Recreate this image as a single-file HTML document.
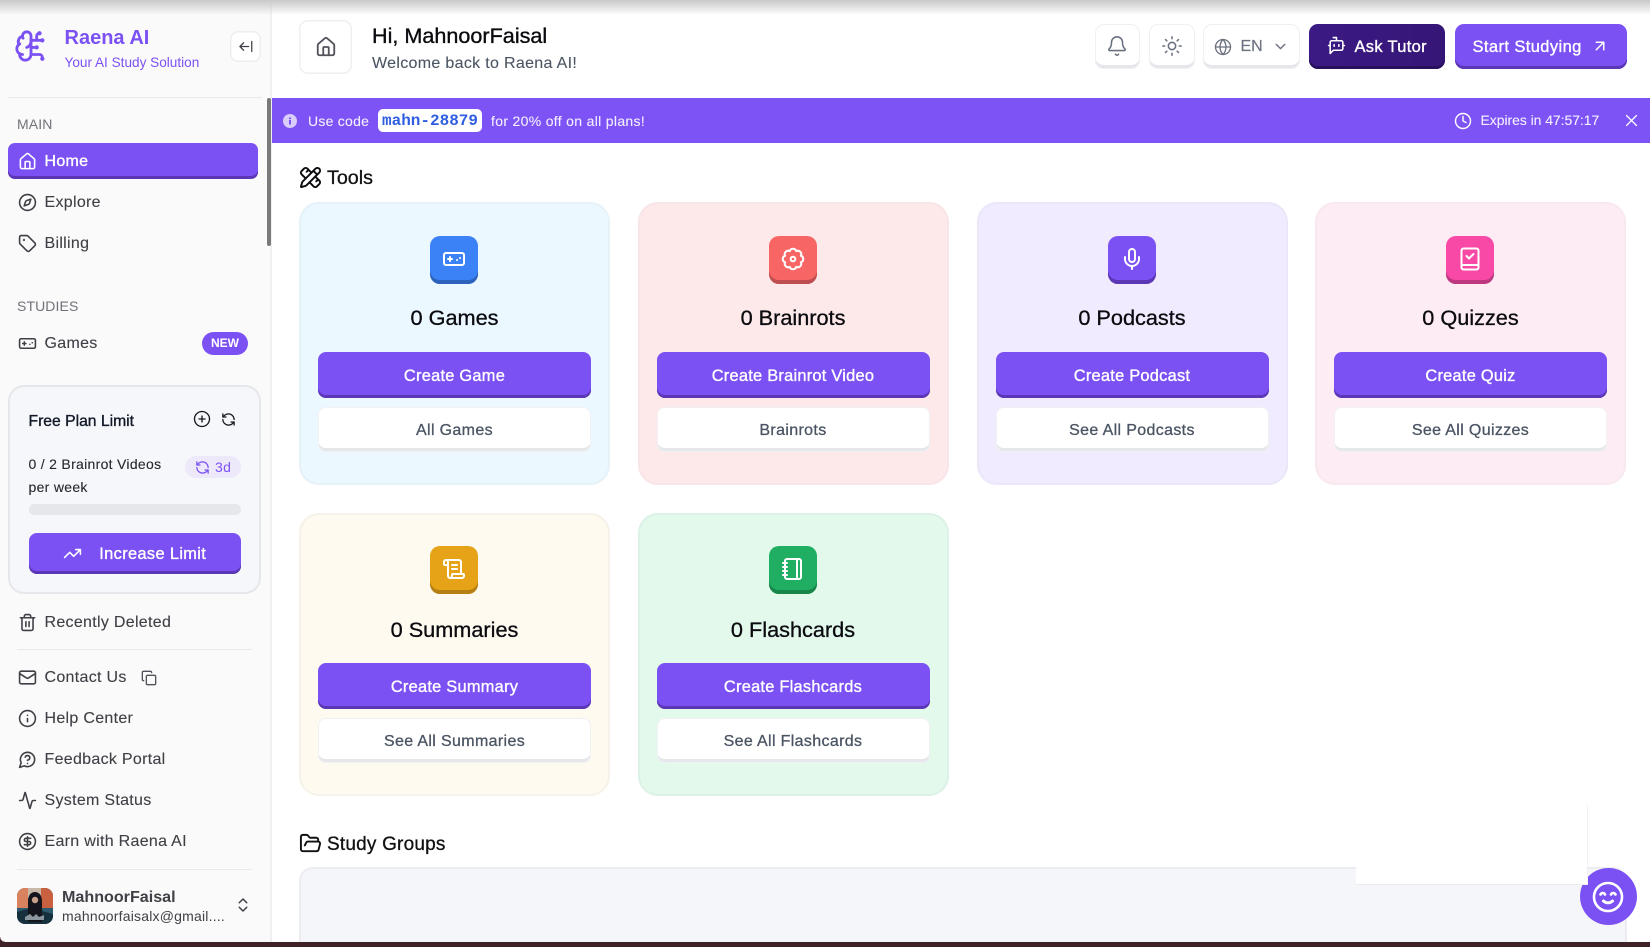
<!DOCTYPE html>
<html lang="en"><head><meta charset="utf-8"><title>Raena AI</title>
<style>
*{box-sizing:border-box;margin:0;padding:0}
html,body{width:1650px;height:947px;overflow:hidden;background:#fff;font-family:"Liberation Sans",sans-serif;color:#111827}
#app{position:relative;width:1650px;height:947px;overflow:hidden;background:#fff}
.a,.t,svg.i{position:absolute}
.t{white-space:nowrap;line-height:24px;height:24px}
svg.i{fill:none;stroke:currentColor;stroke-width:2;stroke-linecap:round;stroke-linejoin:round}
.m{-webkit-text-stroke:.35px currentColor}
#side{position:absolute;left:0;top:0;width:272px;height:947px;background:#fafafa;border-right:2px solid #f0f0f2}
.nav{font-size:16px;letter-spacing:.3px;color:#3f3f46;left:44.5px;margin-top:.5px;-webkit-text-stroke:.12px #3f3f46}
.navi{left:17.5px;width:19px;height:19px;color:#3f3f46;margin-top:1px}
.lab{font-size:14px;color:#71717a;left:17px;letter-spacing:.1px}
.hr{position:absolute;height:1px;background:#e9e9ec}
.pb{position:absolute;background:#7c51f4;border-radius:8px;box-shadow:inset 0 -3px 0 #5b36b5;color:#fff;font-size:16.4px;letter-spacing:.25px;text-align:center;-webkit-text-stroke:.35px #fff}
.tb{position:absolute;top:24px;height:45px;background:#fff;border-radius:9px;box-shadow:inset 0 0 0 1px #f0f0f3,inset 0 -4px 0 #e5e7eb;color:#6b7280}
.card{position:absolute;width:311px;height:283px;border-radius:20px}
.ic{position:absolute;left:131px;top:33.5px;width:48px;height:48px;border-radius:10px;color:#fff}
.ic svg{left:12px;top:11px;width:24px;height:24px}
.ti{position:absolute;left:0;width:311px;top:103px;text-align:center;font-size:21.7px;line-height:26px;color:#0b0b0f;-webkit-text-stroke:.3px #0b0b0f}
.r2 .ti{top:104.5px}
.c1{left:19px;top:150px;width:273px;height:46px;line-height:49px}
.c2{position:absolute;left:19px;top:205px;width:273px;height:45px;line-height:47px;background:#fff;border-radius:8px;box-shadow:inset 0 0 0 1px #f1f1f4,inset 0 -4px 0 #e5e7eb;text-align:center;font-size:16px;color:#4b5563;-webkit-text-stroke:.3px #4b5563;letter-spacing:.35px}
.shad{position:absolute;left:0;top:0;width:1650px;height:15px;background:linear-gradient(#c9c9c9,rgba(255,255,255,0));z-index:9}
</style></head><body>
<svg width="0" height="0" style="position:absolute">
<defs>
<symbol id="home" viewBox="0 0 24 24"><path d="M15 21v-8a1 1 0 0 0-1-1h-4a1 1 0 0 0-1 1v8"/><path d="M3 10a2 2 0 0 1 .709-1.528l7-5.999a2 2 0 0 1 2.582 0l7 5.999A2 2 0 0 1 21 10v9a2 2 0 0 1-2 2H5a2 2 0 0 1-2-2z"/></symbol>
<symbol id="compass" viewBox="0 0 24 24"><circle cx="12" cy="12" r="10"/><path d="m16.24 7.76-1.804 5.411a2 2 0 0 1-1.265 1.265L7.76 16.24l1.804-5.411a2 2 0 0 1 1.265-1.265z"/></symbol>
<symbol id="tag" viewBox="0 0 24 24"><path d="M12.586 2.586A2 2 0 0 0 11.172 2H4a2 2 0 0 0-2 2v7.172a2 2 0 0 0 .586 1.414l8.704 8.704a2.426 2.426 0 0 0 3.42 0l6.58-6.58a2.426 2.426 0 0 0 0-3.42z"/><circle cx="7.5" cy="7.5" r=".5"/></symbol>
<symbol id="game" viewBox="0 0 24 24"><path d="M6 12h4M8 10v4M15 13h.01M18 11h.01"/><rect width="20" height="12" x="2" y="6" rx="2"/></symbol>
<symbol id="trash" viewBox="0 0 24 24"><path d="M3 6h18M19 6v14c0 1-1 2-2 2H7c-1 0-2-1-2-2V6M8 6V4c0-1 1-2 2-2h4c1 0 2 1 2 2v2M10 11v6M14 11v6"/></symbol>
<symbol id="mail" viewBox="0 0 24 24"><rect width="20" height="16" x="2" y="4" rx="2"/><path d="m22 7-8.97 5.7a1.94 1.94 0 0 1-2.06 0L2 7"/></symbol>
<symbol id="info" viewBox="0 0 24 24"><circle cx="12" cy="12" r="10"/><path d="M12 16v-4M12 8h.01"/></symbol>
<symbol id="q" viewBox="0 0 24 24"><path d="M7.9 20A9 9 0 1 0 4 16.1L2 22Z"/><path d="M9.09 9a3 3 0 0 1 5.83 1c0 2-3 3-3 3M12 17h.01"/></symbol>
<symbol id="act" viewBox="0 0 24 24"><path d="M22 12h-2.48a2 2 0 0 0-1.93 1.46l-2.35 8.36a.25.25 0 0 1-.48 0L9.24 2.18a.25.25 0 0 0-.48 0l-2.35 8.36A2 2 0 0 1 4.49 12H2"/></symbol>
<symbol id="dollar" viewBox="0 0 24 24"><circle cx="12" cy="12" r="10"/><path d="M16 8h-6a2 2 0 1 0 0 4h4a2 2 0 1 1 0 4H8M12 18V6"/></symbol>
<symbol id="ud" viewBox="0 0 24 24"><path d="m7 15 5 5 5-5M7 9l5-5 5 5"/></symbol>
<symbol id="bell" viewBox="0 0 24 24"><path d="M10.268 21a2 2 0 0 0 3.464 0"/><path d="M3.262 15.326A1 1 0 0 0 4 17h16a1 1 0 0 0 .74-1.673C19.41 13.956 18 12.499 18 8A6 6 0 0 0 6 8c0 4.499-1.411 5.956-2.738 7.326"/></symbol>
<symbol id="sun" viewBox="0 0 24 24"><circle cx="12" cy="12" r="4"/><path d="M12 2v2M12 20v2M4.93 4.93l1.41 1.41M17.66 17.66l1.41 1.41M2 12h2M20 12h2M6.34 17.66l-1.41 1.41M19.07 4.93l-1.41 1.41"/></symbol>
<symbol id="globe" viewBox="0 0 24 24"><circle cx="12" cy="12" r="10"/><path d="M12 2a14.5 14.5 0 0 0 0 20 14.5 14.5 0 0 0 0-20M2 12h20"/></symbol>
<symbol id="bot" viewBox="0 0 24 24"><path d="M12 6V2H8"/><path d="m8 18-4 4V8a2 2 0 0 1 2-2h12a2 2 0 0 1 2 2v8a2 2 0 0 1-2 2Z"/><path d="M2 12h2M9 11v2M15 11v2M20 12h2"/></symbol>
<symbol id="clock" viewBox="0 0 24 24"><circle cx="12" cy="12" r="10"/><path d="M12 6v6l4 2"/></symbol>
<symbol id="refresh" viewBox="0 0 24 24"><path d="M21 12a9 9 0 0 0-9-9 9.75 9.75 0 0 0-6.74 2.74L3 8"/><path d="M3 3v5h5"/><path d="M3 12a9 9 0 0 0 9 9 9.75 9.75 0 0 0 6.74-2.74L21 16"/><path d="M16 16h5v5"/></symbol>
</defs></svg>
<div id="app">
<div class="shad"></div>

<div id="side"></div>
<svg class="i" style="left:14px;top:29px;width:34px;height:34px;color:#7c51f4" viewBox="0 0 24 24"><path d="M12 5a3 3 0 1 0-5.997.125 4 4 0 0 0-2.526 5.77 4 4 0 0 0 .556 6.588A4 4 0 1 0 12 18Z"/><path d="M9 13a4.5 4.5 0 0 0 3-4M6.003 5.125A3 3 0 0 0 6.401 6.5M3.477 10.896a4 4 0 0 1 .585-.396M6 18a4 4 0 0 1-1.967-.516M12 13h4M12 18h6a2 2 0 0 1 2 2v1M12 8h8M16 8V5a2 2 0 0 1 2-2"/><circle cx="16" cy="13" r=".5"/><circle cx="18" cy="3" r=".5"/><circle cx="20" cy="21" r=".5"/><circle cx="20" cy="8" r=".5"/></svg>
<div class="t" style="left:64.5px;top:26px;font-size:20px;font-weight:700;color:#7c51f4">Raena AI</div>
<div class="t" style="left:64.5px;top:50.5px;font-size:13.6px;color:#7c51f4">Your AI Study Solution</div>
<div class="a" style="left:229.5px;top:31px;width:31.5px;height:31px;border-radius:8px;background:#fff;box-shadow:inset 0 0 0 1.5px #eeeef0"></div>
<svg class="i" style="left:238px;top:39px;width:15px;height:15px;color:#3f3f46" viewBox="0 0 24 24"><path d="M3 12h14M9 6l-6 6 6 6M22 4v16"/></svg>
<div class="hr" style="left:8px;top:97px;width:254px"></div>
<div class="a" style="left:266.5px;top:98px;width:4px;height:148px;border-radius:2px;background:#7a7a7a"></div>

<div class="t lab" style="top:111.5px">MAIN</div>
<div class="a" style="left:8px;top:143px;width:250px;height:36px;border-radius:7px;background:#7c51f4;box-shadow:inset 0 -3px 0 #5b36b5"></div>
<svg class="i navi" style="top:151px;color:#fff"><use href="#home"/></svg>
<div class="t nav m" style="top:149.5px;color:#fff;-webkit-text-stroke:.35px #fff">Home</div>
<svg class="i navi" style="top:192px"><use href="#compass"/></svg><div class="t nav" style="top:190.5px">Explore</div>
<svg class="i navi" style="top:233px"><use href="#tag"/></svg><div class="t nav" style="top:231.5px">Billing</div>
<div class="t lab" style="top:293.5px">STUDIES</div>
<svg class="i navi" style="top:333px"><use href="#game"/></svg><div class="t nav" style="top:331.5px">Games</div>
<div class="a" style="left:202px;top:332px;width:46px;height:23px;border-radius:12px;background:#7c51f4;color:#fff;font-size:12px;font-weight:700;line-height:23px;text-align:center">NEW</div>

<div class="a" style="left:8px;top:385px;width:253px;height:209px;border-radius:16px;background:#f6f7fb;box-shadow:inset 0 0 0 2px #e6e7eb"></div>
<div class="t m" style="left:28.5px;top:410px;font-size:15.7px;color:#111827">Free Plan Limit</div>
<svg class="i" style="left:193px;top:410px;width:18px;height:18px;color:#18181b;stroke-width:1.8" viewBox="0 0 24 24"><circle cx="12" cy="12" r="10"/><path d="M8 12h8M12 8v8"/></svg>
<svg class="i" style="left:221px;top:412px;width:15px;height:15px;color:#18181b"><use href="#refresh"/></svg>
<div class="t" style="left:28.5px;top:452px;font-size:14px;letter-spacing:.3px;color:#27272a;-webkit-text-stroke:.1px #27272a">0 / 2 Brainrot Videos</div>
<div class="t" style="left:28.5px;top:475px;font-size:14px;letter-spacing:.3px;color:#27272a;-webkit-text-stroke:.1px #27272a">per week</div>
<div class="a" style="left:185px;top:456px;width:56px;height:22px;border-radius:11px;background:#ede9fb"></div>
<svg class="i" style="left:195px;top:460px;width:15px;height:15px;color:#7c51f4"><use href="#refresh"/></svg>
<div class="t" style="left:215px;top:455px;font-size:14px;color:#7c51f4;letter-spacing:.3px">3d</div>
<div class="a" style="left:28.5px;top:504px;width:212.5px;height:11px;border-radius:6px;background:#e5e7eb"></div>
<div class="pb" style="left:28.5px;top:533px;width:212.5px;height:41px;line-height:43px;padding-left:36px;letter-spacing:.35px">Increase Limit</div>
<svg class="i" style="left:63px;top:544px;width:19px;height:19px;color:#fff" viewBox="0 0 24 24"><path d="M22 7l-8.5 8.5-5-5L2 17M16 7h6v6"/></svg>

<svg class="i navi" style="top:612px"><use href="#trash"/></svg><div class="t nav" style="top:610.5px">Recently Deleted</div>
<div class="hr" style="left:17px;top:649px;width:235px"></div>
<svg class="i navi" style="top:667px"><use href="#mail"/></svg><div class="t nav" style="top:665.5px">Contact Us</div>
<svg class="i" style="left:141px;top:670px;width:16px;height:16px;color:#52525b" viewBox="0 0 24 24"><rect width="14" height="14" x="8" y="8" rx="2"/><path d="M4 16c-1.1 0-2-.9-2-2V4c0-1.1.9-2 2-2h10c1.1 0 2 .9 2 2"/></svg>
<svg class="i navi" style="top:708px"><use href="#info"/></svg><div class="t nav" style="top:706.5px">Help Center</div>
<svg class="i navi" style="top:749px"><use href="#q"/></svg><div class="t nav" style="top:747.5px">Feedback Portal</div>
<svg class="i navi" style="top:790px"><use href="#act"/></svg><div class="t nav" style="top:788.5px">System Status</div>
<svg class="i navi" style="top:831px"><use href="#dollar"/></svg><div class="t nav" style="top:829.5px">Earn with Raena AI</div>
<div class="hr" style="left:17px;top:869px;width:235px"></div>
<svg class="a" style="left:17px;top:888px;width:36px;height:36px;border-radius:8px" viewBox="0 0 36 36"><rect width="36" height="36" fill="#2e5a70"/><rect width="11" height="20" fill="#d9825f"/><rect x="24" width="12" height="20" fill="#c9603f"/><rect x="11" width="13" height="10" fill="#c8b8a8"/><path d="M0 24L14 20 36 26V36H0Z" fill="#16303d"/><path d="M11 34V14c0-7 3-10 7-10s7 3 7 10v20Z" fill="#14151c"/><circle cx="18" cy="12" r="3.2" fill="#c9a08a"/><path d="M8 29l5-3 3 3 3-3 3 3 5-2v5H8Z" fill="#8b979e"/></svg>
<div class="t" style="left:62px;top:885px;font-size:16.1px;font-weight:700;color:#3f3f46">MahnoorFaisal</div>
<div class="t" style="left:62px;top:904px;font-size:14px;letter-spacing:.2px;color:#3f3f46">mahnoorfaisalx@gmail....</div>
<svg class="i" style="left:234px;top:896px;width:18px;height:18px;color:#3f3f46"><use href="#ud"/></svg>

<div class="a" style="left:299px;top:20px;width:53px;height:54px;border-radius:9px;background:#fff;box-shadow:inset 0 0 0 1.5px #efeff2"></div>
<svg class="i" style="left:315px;top:35.5px;width:22px;height:22px;color:#52525b"><use href="#home"/></svg>
<div class="t" style="left:372px;top:24px;font-size:21.6px;color:#0b0b0f;-webkit-text-stroke:.35px #0b0b0f">Hi, MahnoorFaisal</div>
<div class="t" style="left:372px;top:52px;font-size:16px;letter-spacing:.32px;color:#4b5563;-webkit-text-stroke:.1px #4b5563">Welcome back to Raena AI!</div>

<div class="tb" style="left:1095px;width:45px"></div>
<svg class="i" style="left:1106px;top:35px;width:22px;height:22px;stroke-width:1.7;color:#6b7280"><use href="#bell"/></svg>
<div class="tb" style="left:1149px;width:46px"></div>
<svg class="i" style="left:1161px;top:35px;width:22px;height:22px;stroke-width:1.7;color:#6b7280"><use href="#sun"/></svg>
<div class="tb" style="left:1203px;width:97px"></div>
<svg class="i" style="left:1214px;top:38px;width:18px;height:18px;stroke-width:1.8;color:#6b7280"><use href="#globe"/></svg>
<div class="t" style="left:1240.5px;top:35px;font-size:16px;color:#6b7280;-webkit-text-stroke:.2px #6b7280">EN</div>
<svg class="i" style="left:1272px;top:38px;width:17px;height:17px;color:#6b7280" viewBox="0 0 24 24"><path d="M6 9l6 6 6-6"/></svg>
<div class="a" style="left:1309px;top:24px;width:136px;height:45px;border-radius:9px;background:linear-gradient(90deg,#3b1a84,#351676);box-shadow:inset 0 -3px 0 #28105e"></div>
<svg class="i" style="left:1327px;top:36px;width:19px;height:19px;color:#fff"><use href="#bot"/></svg>
<div class="t m" style="left:1354.5px;top:35px;font-size:16.5px;letter-spacing:.3px;color:#fff">Ask Tutor</div>
<div class="a" style="left:1455px;top:24px;width:172px;height:45px;border-radius:9px;background:#7c51f4;box-shadow:inset 0 -3px 0 #5b36b5"></div>
<div class="t m" style="left:1472.5px;top:35px;font-size:16.5px;letter-spacing:.4px;color:#fff">Start Studying</div>
<svg class="i" style="left:1591px;top:37px;width:18px;height:18px;color:#fff" viewBox="0 0 24 24"><path d="M7 7h10v10M7 17 17 7"/></svg>

<div class="a" style="left:272px;top:98px;width:1378px;height:45px;background:#7e53f5"></div>
<svg class="a" style="left:283px;top:114px;width:14px;height:14px" viewBox="0 0 14 14"><circle cx="7" cy="7" r="7" fill="#d9cdfb"/><rect x="6" y="6" width="2" height="4.5" fill="#7e53f5"/><rect x="6" y="3.5" width="2" height="1.7" fill="#7e53f5"/></svg>
<div class="t" style="left:308px;top:108.5px;font-size:14px;letter-spacing:.25px;color:#f3efff;-webkit-text-stroke:.1px #f3efff">Use code</div>
<div class="a" style="left:378px;top:109px;width:104px;height:23px;border-radius:5px;background:#fff;font:700 16px/24.5px 'Liberation Mono',monospace;color:#2f5fe0;text-align:center">mahn-28879</div>
<div class="t" style="left:491px;top:108.5px;font-size:14px;letter-spacing:.32px;color:#f3efff;-webkit-text-stroke:.1px #f3efff">for 20% off on all plans!</div>
<svg class="i" style="left:1453.5px;top:111.5px;width:18px;height:18px;stroke-width:1.9;color:#fff"><use href="#clock"/></svg>
<div class="t" style="left:1480.5px;top:108px;font-size:14px;letter-spacing:-.06px;color:#f3efff;-webkit-text-stroke:.1px #f3efff">Expires in 47:57:17</div>
<svg class="i" style="left:1624px;top:113px;width:15px;height:15px;color:#fff" viewBox="0 0 24 24"><path d="M20 4 4 20M4 4l16 16"/></svg>

<svg class="i" style="left:298.5px;top:166px;width:23px;height:23px;color:#0b0b0f" viewBox="0 0 24 24"><path d="M13 7 8.7 2.7a2.41 2.41 0 0 0-3.4 0L2.7 5.3a2.41 2.41 0 0 0 0 3.4L7 13M8 6l2-2M18 16l2-2M17 11l4.3 4.3c.94.94.94 2.46 0 3.4l-2.6 2.6c-.94.94-2.46.94-3.4 0L11 17"/><path d="M21.174 6.812a1 1 0 0 0-3.986-3.987L3.842 16.174a2 2 0 0 0-.5.83l-1.321 4.352a.5.5 0 0 0 .623.622l4.353-1.32a2 2 0 0 0 .83-.497zM15 5l4 4"/></svg>
<div class="t" style="left:327px;top:165.5px;font-size:19.7px;color:#111;-webkit-text-stroke:.3px #111">Tools</div>

<div class="card" style="left:299px;top:202px;background:#ebf8ff;box-shadow:inset 0 0 0 2px #e6f1f8">
<div class="ic" style="background:#3b82f6;box-shadow:inset 0 -4px 0 #2d63bd"><svg class="i"><use href="#game"/></svg></div>
<div class="ti">0 Games</div><div class="pb c1">Create Game</div><div class="c2">All Games</div></div>

<div class="card" style="left:637.5px;top:202px;background:#fee9ea;box-shadow:inset 0 0 0 2px #f8e5e7">
<div class="ic" style="background:#f86565;box-shadow:inset 0 -4px 0 #bd4d50"><svg class="i" viewBox="0 0 24 24"><path d="M8.75 4.15A3.4 3.4 0 0 1 15.25 4.15A3.4 3.4 0 0 1 19.85 8.75A3.4 3.4 0 0 1 19.85 15.25A3.4 3.4 0 0 1 15.25 19.85A3.4 3.4 0 0 1 8.75 19.85A3.4 3.4 0 0 1 4.15 15.25A3.4 3.4 0 0 1 4.15 8.75A3.4 3.4 0 0 1 8.75 4.15Z"/><circle cx="12" cy="12" r="2.3"/></svg></div>
<div class="ti">0 Brainrots</div><div class="pb c1">Create Brainrot Video</div><div class="c2">Brainrots</div></div>

<div class="card" style="left:976.5px;top:202px;background:#f0ebfe;box-shadow:inset 0 0 0 2px #ebe7f9">
<div class="ic" style="background:#7c51f4;box-shadow:inset 0 -4px 0 #5b36b5"><svg class="i" viewBox="0 0 24 24"><path d="M12 19v3M19 10v2a7 7 0 0 1-14 0v-2"/><rect x="9" y="2" width="6" height="13" rx="3"/></svg></div>
<div class="ti">0 Podcasts</div><div class="pb c1">Create Podcast</div><div class="c2">See All Podcasts</div></div>

<div class="card" style="left:1315px;top:202px;background:#feecf4;box-shadow:inset 0 0 0 2px #f8e8ef">
<div class="ic" style="background:#f849a6;box-shadow:inset 0 -4px 0 #bd387f"><svg class="i" viewBox="0 0 24 24"><rect x="3.5" y="1.5" width="17" height="21" rx="2"/><path d="M3.5 18h17M8.5 9l2.5 2.5 4.5-4.500"/></svg></div>
<div class="ti">0 Quizzes</div><div class="pb c1">Create Quiz</div><div class="c2">See All Quizzes</div></div>

<div class="card r2" style="left:299px;top:512.5px;background:#fffaf0;box-shadow:inset 0 0 0 2px #f6f2e9">
<div class="ic" style="background:#e6a317;box-shadow:inset 0 -4px 0 #b57f13"><svg class="i" viewBox="0 0 24 24"><path d="M15 12h-5M15 8h-5M19 17V5a2 2 0 0 0-2-2H4"/><path d="M8 21h12a2 2 0 0 0 2-2v-1a1 1 0 0 0-1-1H11a1 1 0 0 0-1 1v1a2 2 0 1 1-4 0V5a2 2 0 1 0-4 0v2a1 1 0 0 0 1 1h3"/></svg></div>
<div class="ti">0 Summaries</div><div class="pb c1">Create Summary</div><div class="c2">See All Summaries</div></div>

<div class="card r2" style="left:637.5px;top:512.5px;background:#e2f9ec;box-shadow:inset 0 0 0 2px #dcf2e6">
<div class="ic" style="background:#1fae62;box-shadow:inset 0 -4px 0 #178648"><svg class="i" viewBox="0 0 24 24"><path d="M2 6h4M2 10h4M2 14h4M2 18h4"/><rect x="4" y="2" width="16" height="20" rx="2"/><path d="M16 2v20"/></svg></div>
<div class="ti">0 Flashcards</div><div class="pb c1">Create Flashcards</div><div class="c2">See All Flashcards</div></div>

<svg class="i" style="left:298.5px;top:832px;width:23px;height:23px;color:#111" viewBox="0 0 24 24"><path d="m6 14 1.5-2.9A2 2 0 0 1 9.24 10H20a2 2 0 0 1 1.94 2.5l-1.54 6a2 2 0 0 1-1.95 1.5H4a2 2 0 0 1-2-2V5a2 2 0 0 1 2-2h3.9a2 2 0 0 1 1.69.9l.81 1.2a2 2 0 0 0 1.67.9H18a2 2 0 0 1 2 2v2"/></svg>
<div class="t" style="left:327px;top:832.5px;font-size:19px;color:#111;-webkit-text-stroke:.3px #111;letter-spacing:.2px">Study Groups</div>
<div class="a" style="left:299px;top:867px;width:1328px;height:100px;border-radius:14px;background:#f5f6fa;box-shadow:inset 0 0 0 2px #ecedf0"></div>

<div class="a" style="left:1579.5px;top:868px;width:57px;height:57px;border-radius:50%;background:#7c51f4"></div>
<svg class="a" style="left:1592px;top:881px;width:32px;height:32px" viewBox="0 0 32 32" fill="none" stroke="#fff" stroke-width="2.6" stroke-linecap="round"><circle cx="16" cy="16" r="14"/><path d="M8.5 13.5c1-2 3.5-2 4.5 0M19 13.5c1-2 3.5-2 4.5 0"/><path d="M11.5 20c2.5 2.5 6.5 2.5 9 0" stroke-width="3"/></svg>
<div class="a" style="left:1356px;top:805px;width:232px;height:80px;background:#fff;border-right:1px solid #f1f1f3;border-bottom:1px solid #ededf0;z-index:3"></div>

<div class="a" style="left:0;top:942px;width:1650px;height:5px;background:#3f2228;z-index:8"></div>
<div class="a" style="left:0;top:937px;width:5px;height:5px;background:radial-gradient(circle at 100% 0,transparent 4.5px,#3f2228 5px);z-index:8"></div>
</div>
</body></html>
